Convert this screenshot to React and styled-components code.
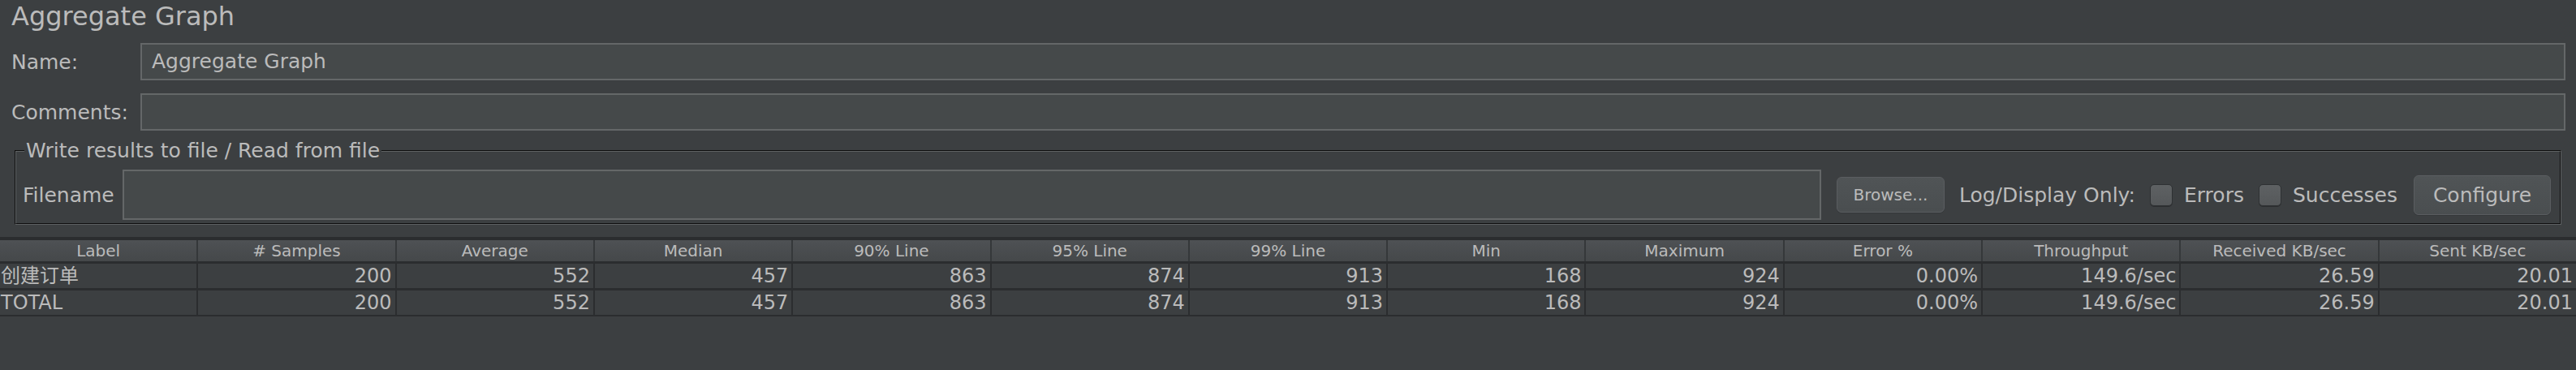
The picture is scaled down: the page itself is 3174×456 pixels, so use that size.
import React from "react";
import styled, { createGlobalStyle } from "styled-components";

const GlobalStyle = createGlobalStyle`
  html, body {
    margin: 0;
    padding: 0;
    background: #3c3f41;
  }
  body {
    font-family: "DejaVu Sans", "Noto Sans CJK SC", sans-serif;
    color: #bbbbbb;
  }
`;

const columns = [
  "Label",
  "# Samples",
  "Average",
  "Median",
  "90% Line",
  "95% Line",
  "99% Line",
  "Min",
  "Maximum",
  "Error %",
  "Throughput",
  "Received KB/sec",
  "Sent KB/sec",
];

const rows = [
  ["创建订单", "200", "552", "457", "863", "874", "913", "168", "924", "0.00%", "149.6/sec", "26.59", "20.01"],
  ["TOTAL", "200", "552", "457", "863", "874", "913", "168", "924", "0.00%", "149.6/sec", "26.59", "20.01"],
];

function App() {
  return (
    <>
      <GlobalStyle />
      <Page>
        <Title>Aggregate Graph</Title>
        <Form>
          <FormRow>
            <Label>Name:</Label>
            <Field>Aggregate Graph</Field>
          </FormRow>
          <FormRow>
            <Label>Comments:</Label>
            <Field />
          </FormRow>
        </Form>
        <Group>
          <Legend>Write results to file / Read from file</Legend>
          <FileRow>
            <FileLabel>Filename</FileLabel>
            <FileField />
            <SmallButton>Browse...</SmallButton>
            <Text>Log/Display Only:</Text>
            <Check />
            <CheckText>Errors</CheckText>
            <Check />
            <CheckText>Successes</CheckText>
            <Button>Configure</Button>
          </FileRow>
        </Group>
        <Table>
          <HeaderRow>
            {columns.map((c) => (
              <HeaderCell key={c}>{c}</HeaderCell>
            ))}
          </HeaderRow>
          {rows.map((r, i) => (
            <DataRow key={i}>
              {r.map((v, j) => (
                <Cell key={j} first={j === 0}>
                  {v}
                </Cell>
              ))}
            </DataRow>
          ))}
        </Table>
      </Page>
    </>
  );
}

export default App;

const Page = styled.div`
  width: 3174px;
  height: 456px;
  display: flex;
  flex-direction: column;
  background: #3c3f41;
  overflow: hidden;
`;

const Title = styled.div`
  height: 40px;
  line-height: 40px;
  padding-left: 14px;
  font-size: 32px;
`;

const Form = styled.div`
  display: flex;
  flex-direction: column;
  gap: 16px;
  margin-top: 13px;
  padding: 0 13px 0 14px;
`;

const FormRow = styled.div`
  display: flex;
  align-items: center;
`;

const Label = styled.div`
  width: 159px;
  font-size: 25px;
`;

const Field = styled.div`
  flex: 1;
  height: 46px;
  box-sizing: border-box;
  border: 2px solid #646768;
  background: #45494a;
  font-size: 25px;
  line-height: 42px;
  padding-left: 12px;
`;

const Group = styled.fieldset`
  margin: 11px 18px 0;
  padding: 9px 11px 4px 8px;
  border: 2px groove #5e6163;
  min-width: 0;
`;

const Legend = styled.legend`
  font-size: 25px;
  line-height: 28px;
  padding: 0 2px;
  margin-left: 2px;
`;

const FileRow = styled.div`
  display: flex;
  align-items: center;
  height: 62px;
`;

const FileLabel = styled.div`
  width: 123px;
  font-size: 25px;
`;

const FileField = styled.div`
  flex: 1;
  height: 62px;
  box-sizing: border-box;
  border: 2px solid #646768;
  background: #45494a;
  margin-right: 19px;
`;

const SmallButton = styled.div`
  width: 133px;
  height: 44px;
  box-sizing: border-box;
  border: 1px solid #5a5d60;
  border-radius: 6px;
  background: linear-gradient(#505456, #4a4e50);
  box-shadow: 0 1px 0 #35383a;
  font-size: 20px;
  display: flex;
  align-items: center;
  justify-content: center;
  margin-right: 18px;
`;

const Text = styled.div`
  font-size: 25px;
  margin-right: 18px;
`;

const Check = styled.div`
  width: 28px;
  height: 27px;
  box-sizing: border-box;
  border: 1px solid #2e3133;
  border-radius: 5px;
  background: linear-gradient(#5e6163, #55585a);
  box-shadow: 0 1px 0 #2c2e30;
  margin-right: 14px;
`;

const CheckText = styled.div`
  font-size: 25px;
  margin-right: 18px;
`;

const Button = styled.div`
  margin-left: 2px;
  width: 169px;
  height: 49px;
  box-sizing: border-box;
  border: 1px solid #5a5d60;
  border-radius: 6px;
  background: linear-gradient(#505456, #4a4e50);
  box-shadow: 0 1px 0 #35383a;
  font-size: 25px;
  display: flex;
  align-items: center;
  justify-content: center;
`;

const Table = styled.div`
  margin-top: 15px;
  display: flex;
  flex-direction: column;
  gap: 3px;
  padding: 4px 0 2px;
  background: #2b2d2f;
`;

const HeaderRow = styled.div`
  display: grid;
  grid-template-columns: repeat(13, 1fr);
  column-gap: 2px;
  height: 26px;
  background: #35383a;
`;

const HeaderCell = styled.div`
  background: linear-gradient(#4e5154, #45484a);
  font-size: 20px;
  line-height: 26px;
  text-align: center;
  white-space: nowrap;
  overflow: hidden;
`;

const DataRow = styled.div`
  display: grid;
  grid-template-columns: repeat(13, 1fr);
  column-gap: 2px;
  height: 30px;
`;

const Cell = styled.div`
  background: #3c3f41;
  font-size: 24px;
  line-height: 30px;
  white-space: nowrap;
  overflow: hidden;
  text-align: ${(p) => (p.first ? "left" : "right")};
  padding: ${(p) => (p.first ? "0 0 0 1px" : "0 4px 0 0")};
`;
